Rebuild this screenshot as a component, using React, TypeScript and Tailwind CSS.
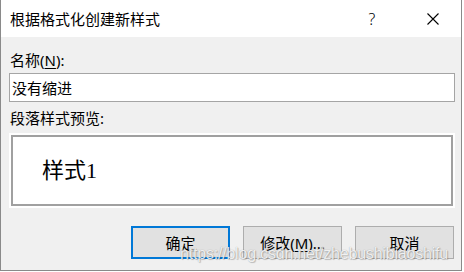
import React from "react";

const ui = { fontFamily: '"Noto Sans", "Noto Sans CJK SC", sans-serif' };

export default function App() {
  return (
    <div className="w-[464px] h-[272px] bg-white relative overflow-hidden">
      <div
        className="w-[462px] h-[271px] border-l border-r border-b border-[#8a8a8a] flex flex-col bg-[#f0f0f0] text-black"
        style={ui}
      >
        {/* title bar */}
        <div className="h-[37px] bg-white flex items-center shrink-0">
          <div className="pl-[9px] text-[15px] leading-[20px] flex-1">根据格式化创建新样式</div>
          <div className="w-[20px] text-center text-[16px] leading-[20px] font-light mr-[45px]">?</div>
          <div className="w-[12px] h-[12px] mr-[22px]">
            <svg width="12" height="12" viewBox="0 0 12 12">
              <path d="M0.5 0.5 L11.5 11.5 M11.5 0.5 L0.5 11.5" stroke="#000" strokeWidth="1.1" fill="none" />
            </svg>
          </div>
        </div>
        {/* body */}
        <div className="flex flex-col pl-[8px] pr-[6px] pt-[13px]">
          <div className="pl-[1px] text-[15px] leading-[20px] h-[20px]">
            名称(<span className="underline underline-offset-2">N</span>):
          </div>
          <div className="mt-[3px] h-[29px] bg-white border border-[#a5a5a5] flex items-center pl-[2px] text-[15px] leading-[20px]">
            没有缩进
          </div>
          <div className="mt-[6px] pl-[1px] text-[15px] leading-[20px] h-[20px]">段落样式预览:</div>
          <div className="mt-[5px] h-[75px] bg-white p-[2px]">
            <div className="h-full border-2 border-[#a0a0a0] flex items-center pl-[29px]">
              <span
                className="text-[22px] leading-[26px]"
                style={{ fontFamily: '"Liberation Serif", "Noto Sans CJK SC", serif' }}
              >
                样式1
              </span>
            </div>
          </div>
          <div className="mt-[18px] flex justify-end gap-[13px] pr-[1px]">
            <div className="w-[99px] h-[33px] border-2 border-[#0078d7] bg-[#e1e1e1] flex items-center justify-center text-[15px] leading-[20px]">
              确定
            </div>
            <div className="w-[99px] h-[33px] border border-[#adadad] bg-[#e1e1e1] flex items-center justify-center text-[15px] leading-[20px]">
              修改(<span className="underline underline-offset-2">M</span>)...
            </div>
            <div className="w-[99px] h-[33px] border border-[#adadad] bg-[#e1e1e1] flex items-center justify-center text-[15px] leading-[20px]">
              取消
            </div>
          </div>
        </div>
      </div>
      {/* watermark */}
      <div
        className="absolute left-[180px] top-[244px] text-[16px] leading-[20px] text-white/85 whitespace-nowrap pointer-events-none tracking-[-0.2px]"
        style={{
          fontFamily: '"Liberation Sans", Arial, sans-serif',
          textShadow: "0 0 1px rgba(0,0,0,0.35), 1px 1px 1px rgba(0,0,0,0.2)",
        }}
      >
        https://blog.csdn.net/zhebushibiaoshifu
      </div>
    </div>
  );
}
